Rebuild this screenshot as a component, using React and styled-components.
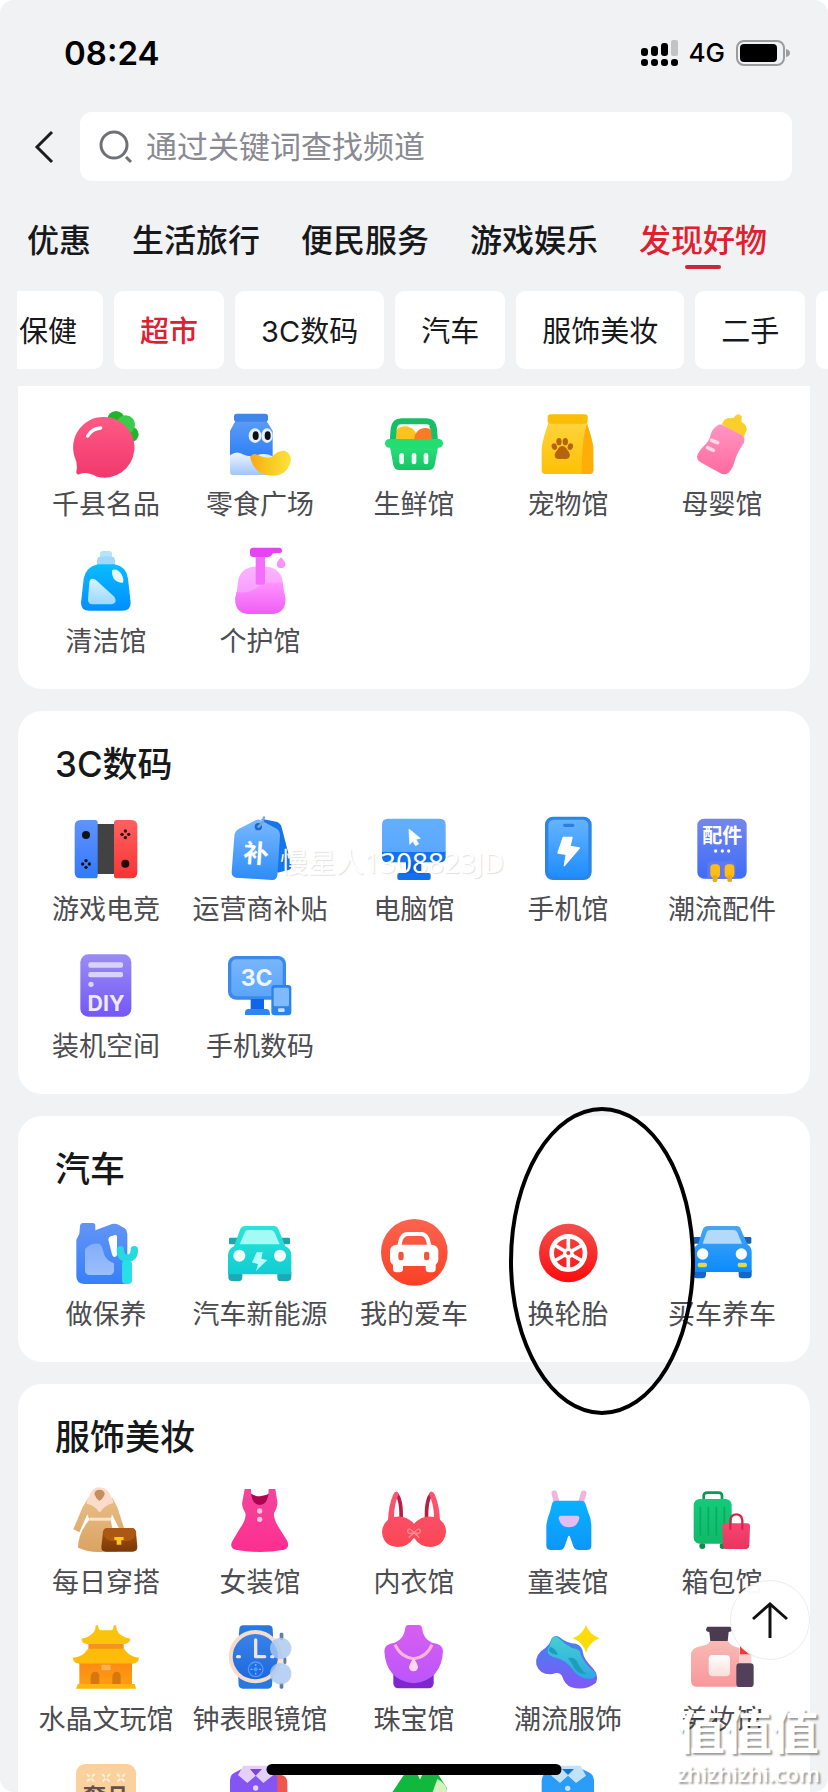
import { useState } from "react";
import styled, { createGlobalStyle } from "styled-components";

const GlobalStyle = createGlobalStyle`
  * {
    box-sizing: border-box;
  }
  body {
    margin: 0;
    background: #fff;
    font-family: Inter, "Noto Sans CJK SC", sans-serif;
    color: #17181a;
  }
  button, input {
    font: inherit;
    color: inherit;
    border: 0;
    padding: 0;
    background: none;
  }
  a {
    color: inherit;
    text-decoration: none;
  }
  svg {
    display: block;
    flex-shrink: 0;
  }
`;

const IconText = styled.text`
  font-size: ${({ $size }) => $size}px;
  font-weight: 700;
  text-anchor: middle;
  fill: ${({ fill }) => fill || "#fff"};
`;

const Fade = ({ id, from, to }) => (
  <linearGradient id={id} x1="0" y1="0" x2="0" y2="1">
    <stop offset="0" stopColor={from} />
    <stop offset="1" stopColor={to} />
  </linearGradient>
);

const icons = {
  radish: (
    <>
      <Fade id="radish" from="#ff5a86" to="#f0386c" />
      <circle cx="138" cy="38" r="26" fill="#1fb32e" />
      <circle cx="183" cy="82" r="23" fill="#1fb32e" />
      <circle cx="167" cy="53" r="28" fill="#3bcb4b" />
      <path
        d="M99 30a90 91 0 1 1-18 179Q48 191 28 202Q18 204 19 194Q24 172 14 150A90 91 0 0 1 99 30z"
        fill="url(#radish)"
      />
      <path d="M53 87Q66 65 92 63" stroke="#fff" strokeWidth="10" strokeLinecap="round" fill="none" />
    </>
  ),
  snack: (
    <>
      <Fade id="milk" from="#5b9bf2" to="#2f80fb" />
      <Fade id="milkLow" from="#edf4ff" to="#9fc6fb" />
      <linearGradient id="chip">
        <stop offset="0" stopColor="#f9a616" />
        <stop offset=".4" stopColor="#f8c51c" />
        <stop offset="1" stopColor="#fde33c" />
      </linearGradient>
      <path d="M34 42H128L146 72V150H18V72z" fill="url(#milk)" />
      <rect x="30" y="20" width="102" height="24" rx="8" fill="#3f86ea" />
      <path d="M18 145Q38 130 56 142Q80 152 100 144Q124 136 146 148V204H28Q18 204 18 194z" fill="url(#milkLow)" />
      <ellipse cx="93" cy="86" rx="19" ry="22" fill="#e4f1fb" />
      <ellipse cx="129" cy="86" rx="17" ry="22" fill="#e4f1fb" />
      <ellipse cx="95" cy="86" rx="9" ry="13" fill="#0c1118" />
      <ellipse cx="131" cy="86" rx="9" ry="13" fill="#0c1118" />
      <path
        d="M78 150Q86 136 100 143Q124 156 144 150Q160 130 182 131Q204 140 200 165Q188 206 146 206Q92 206 78 150z"
        fill="url(#chip)"
      />
    </>
  ),
  basket: (
    <>
      <Fade id="basket" from="#2be37a" to="#16c466" />
      <circle cx="81" cy="94" r="36" fill="#fcc21f" />
      <circle cx="142" cy="96" r="33" fill="#fb7a22" />
      <path d="M154 60Q158 50 172 52Q172 68 160 68z" fill="#0c8d3d" />
      <path d="M44 104L47 66Q50 43 70 43H146Q165 43 168 66L171 104" stroke="#14c065" strokeWidth="18" fill="none" />
      <path d="M34 110L46 174Q49 189 64 189H152Q167 189 170 174L182 110z" fill="url(#basket)" />
      <rect x="21" y="96" width="174" height="26" rx="13" fill="#22de72" />
      <rect x="64" y="138" width="14" height="34" rx="7" fill="#f0fff6" />
      <rect x="101" y="138" width="14" height="34" rx="7" fill="#f0fff6" />
      <rect x="137" y="138" width="14" height="34" rx="7" fill="#f0fff6" />
    </>
  ),
  pet: (
    <>
      <Fade id="pet" from="#ffd33c" to="#fdc105" />
      <path d="M50 46H165L180 104Q184 120 184 190Q184 201 172 201H40Q29 201 29 190V125Q31 98 50 46z" fill="url(#pet)" />
      <path d="M165 50Q149 96 149 201H172Q184 201 184 190V120Q181 96 165 50z" fill="#ffad08" />
      <rect x="47" y="22" width="120" height="28" rx="9" fill="#fbbd06" />
      <ellipse cx="67" cy="119" rx="8" ry="10" fill="#b5640c" transform="rotate(-20 67 119)" />
      <ellipse cx="81" cy="104" rx="8" ry="11" fill="#b5640c" />
      <ellipse cx="100" cy="104" rx="8" ry="11" fill="#b5640c" />
      <ellipse cx="115" cy="119" rx="8" ry="10" fill="#b5640c" transform="rotate(20 115 119)" />
      <path d="M91 117Q100 117 106 129Q118 142 111 152Q104 158 91 155Q76 158 70 152Q64 142 76 129Q82 117 91 117z" fill="#b5640c" />
    </>
  ),
  baby: (
    <>
      <Fade id="baby" from="#ff96c2" to="#ff6a9f" />
      <path d="M108 52Q112 36 128 33Q144 36 148 26Q158 16 167 28Q168 38 166 44Q186 56 181 72L172 92z" fill="#fbcf2b" />
      <path
        d="M92 57Q102 49 114 56L166 84Q179 92 174 107Q152 138 146 163Q140 186 128 197Q116 206 102 198L44 166Q29 157 35 142Q42 126 60 110Q71 100 74 82Q80 64 92 57z"
        fill="url(#baby)"
      />
      <path d="M77 100L95 107M65 122L82 130" stroke="#ffd9e8" strokeWidth="11" strokeLinecap="round" />
    </>
  ),
  clean: (
    <>
      <Fade id="clean" from="#0bbcff" to="#008eff" />
      <Fade id="cleanPane" from="#d8f2ff" to="#9bd8fd" />
      <rect x="90" y="21" width="36" height="26" rx="8" fill="#b8e2fb" />
      <path d="M84 40Q108 34 132 40Q138 50 134 62H82Q78 50 84 40z" fill="#9fd8fa" />
      <path
        d="M84 61H134Q170 68 174 104L182 176Q182 200 157 200H58Q33 200 33 176L41 104Q48 68 84 61z"
        fill="url(#clean)"
      />
      <path d="M58 116Q60 98 77 107L133 158Q144 178 124 181H68Q53 181 54 166z" fill="url(#cleanPane)" />
      <path d="M126 79Q140 70 154 90Q164 108 158 117Q124 114 126 79z" fill="#e6f7ff" />
    </>
  ),
  care: (
    <>
      <Fade id="care" from="#fbb5ff" to="#f48bff" />
      <Fade id="careLow" from="#ff94ff" to="#ee5df5" />
      <path
        d="M86 68H132Q170 74 176 112Q178 140 184 162Q186 208 144 210H74Q32 208 34 162Q40 140 42 112Q48 74 86 68z"
        fill="url(#care)"
      />
      <path
        d="M38 144Q74 150 104 128Q136 108 176 118Q178 140 184 162Q186 208 144 210H74Q32 208 34 162z"
        fill="url(#careLow)"
      />
      <rect x="95" y="34" width="28" height="88" rx="6" fill="#f66dfb" />
      <path d="M86 11H166Q174 12 174 20Q174 27 166 27H146Q142 39 132 39H88Q78 38 78 30V20Q78 12 86 11z" fill="#e643f3" />
      <path d="M171 40Q186 56 184 62Q182 72 171 72Q160 72 158 62Q158 54 171 40z" fill="#fb92fb" />
    </>
  ),
  game: (
    <>
      <Fade id="gameL" from="#5f93fb" to="#3279ff" />
      <Fade id="gameR" from="#ff6160" to="#f83434" />
      <rect x="80" y="36" width="56" height="150" fill="#424242" />
      <path d="M80 24V199H32Q14 199 14 181V42Q14 24 32 24H76Q83 24 83 32V191Q83 199 76 199" fill="url(#gameL)" />
      <path d="M140 24H184Q202 24 202 42V181Q202 199 184 199H140Q132 199 132 191V32Q132 24 140 24z" fill="url(#gameR)" />
      <circle cx="48" cy="69" r="12" fill="#10131a" />
      <circle cx="166" cy="155" r="12" fill="#1c0b0c" />
      {[[166, 67], [48, 156]].map(([x, y]) => (
        <g key={x} fill="#161112">
          <circle cx={x} cy={y - 10} r="5" />
          <circle cx={x} cy={y + 10} r="5" />
          <circle cx={x - 10} cy={y} r="5" />
          <circle cx={x + 10} cy={y} r="5" />
        </g>
      ))}
    </>
  ),
  tag: (
    <>
      <Fade id="tag" from="#79b9fd" to="#2d8bf8" />
      <path d="M112 20L160 30Q172 36 174 50L202 158Q204 170 194 174L160 182z" fill="#1674ec" />
      <path
        d="M31 72Q32 58 44 51L96 24Q104 20 113 26L158 50Q168 57 168 70L160 190Q158 205 144 204L36 197Q22 194 23 180z"
        fill="url(#tag)"
      />
      <circle cx="103" cy="44" r="11" fill="#1a68cf" />
      <path d="M103 44Q116 36 120 16" stroke="#74a7e3" strokeWidth="7" strokeLinecap="round" fill="none" />
      <IconText x="96" y="152" $size={76} transform="rotate(4 96 124)">补</IconText>
    </>
  ),
  computer: (
    <>
      <Fade id="pc" from="#63aefe" to="#5aa8ff" />
      <path d="M84 150H130V186H84z" fill="#0d63e4" />
      <path d="M12 118H203V134Q203 151 186 151H29Q12 151 12 134z" fill="#1372ee" />
      <path d="M12 120V38Q12 20 30 20H185Q203 20 203 38V120z" fill="url(#pc)" />
      <rect x="58" y="183" width="100" height="21" rx="6" fill="#146fec" />
      <path d="M93 51L127 79L114 82L122 96L112 101L105 88L95 97z" fill="#fff" stroke="#fff" strokeWidth="2" strokeLinejoin="round" />
    </>
  ),
  phone: (
    <>
      <Fade id="phone" from="#66b3fe" to="#1f8dff" />
      <rect x="39" y="14" width="140" height="190" rx="24" fill="#2b84e6" />
      <rect x="49" y="23" width="120" height="172" rx="16" fill="url(#phone)" />
      <rect x="93" y="35" width="34" height="10" rx="5" fill="#2b7fe0" />
      <path
        d="M94 76H120L114 103L142 108L97 161L103 127L78 123z"
        fill="#fff"
        stroke="#fff"
        strokeWidth="4"
        strokeLinejoin="round"
      />
    </>
  ),
  parts: (
    <>
      <Fade id="parts" from="#7486ec" to="#3e6df8" />
      <rect x="34" y="20" width="148" height="180" rx="20" fill="url(#parts)" />
      <path d="M64 200V158Q66 148 76 148H136Q148 148 148 158V200z" fill="#6079f1" />
      <rect x="73" y="157" width="29" height="40" rx="11" fill="#fdbd16" />
      <rect x="80" y="190" width="14" height="20" rx="5" fill="#f0a80f" />
      <rect x="116" y="157" width="29" height="40" rx="11" fill="#fdbd16" />
      <rect x="124" y="190" width="14" height="20" rx="5" fill="#f0a80f" />
      <circle cx="89" cy="117" r="5" fill="#fff" />
      <circle cx="109" cy="117" r="5" fill="#fff" />
      <circle cx="128" cy="117" r="5" fill="#fff" />
      <IconText x="109" y="92" $size={60}>配件</IconText>
    </>
  ),
  diy: (
    <>
      <Fade id="diy" from="#9a8cf4" to="#7457f6" />
      <rect x="31" y="16" width="153" height="187" rx="24" fill="url(#diy)" />
      <g fill="#d9d3fc">
        <rect x="55" y="40" width="104" height="16" rx="6" />
        <rect x="55" y="69" width="104" height="16" rx="6" />
        <circle cx="63" cy="106" r="8" />
      </g>
      <IconText x="108" y="185" $size={64} fill="#eeebff">DIY</IconText>
    </>
  ),
  digital: (
    <>
      <Fade id="digi" from="#79b5fb" to="#5aa6fb" />
      <rect x="12" y="21" width="174" height="131" rx="24" fill="#3a8aee" />
      <rect x="22" y="31" width="154" height="111" rx="15" fill="url(#digi)" />
      <rect x="80" y="150" width="40" height="34" fill="#0f67e8" />
      <path d="M63 198V190Q64 180 74 180H128Q138 180 138 198z" fill="#2c86f4" />
      <rect x="142" y="108" width="60" height="91" rx="10" fill="#2d83ec" />
      <rect x="149" y="116" width="46" height="56" rx="5" fill="#7fbafc" />
      <rect x="162" y="178" width="20" height="11" rx="4" fill="#c9e3ff" />
      <IconText x="98" y="110" $size={69} fill="#edf6ff">3C</IconText>
    </>
  ),
  service: (
    <>
      <Fade id="oil" from="#6394f5" to="#3580fa" />
      <Fade id="oilPane" from="#83adf9" to="#9cbffb" />
      <path
        fillRule="evenodd"
        d="M30 26Q31 18 38 18H68Q76 18 76 26V40L126 21Q136 18 147 24L164 34Q172 39 172 50V201H42Q19 200 19 178V68L28 50zM115 68Q115 60 122 58L136 54Q141 53 141 60V112Q141 120 132 120Q128 120 126 112z"
        fill="url(#oil)"
      />
      <path d="M45 96Q62 76 88 80Q97 84 102 112Q110 132 132 139V162Q130 174 118 174H58Q45 173 45 160z" fill="url(#oilPane)" />
      <path d="M151 98Q151 123 172 123Q193 123 193 98M171 124V186" stroke="#25d9e2" strokeWidth="22" strokeLinecap="round" fill="none" />
      <rect x="156" y="130" width="30" height="71" rx="12" fill="#28dfe6" />
    </>
  ),
  evcar: (
    <>
      <Fade id="ev" from="#2ce4da" to="#11cdd2" />
      <rect x="15" y="62" width="30" height="20" rx="4" fill="#1ba5ad" />
      <rect x="170" y="62" width="28" height="20" rx="4" fill="#1ba5ad" />
      <path d="M13 166H55V182Q54 192 44 192H24Q13 192 13 180z" fill="#1aa9b6" />
      <path d="M160 166H202V180Q202 192 190 192H170Q160 192 160 182z" fill="#1aa9b6" />
      <path
        d="M48 38Q52 27 64 27H150Q160 27 164 38L184 88Q202 96 202 114V172H12V114Q13 96 30 88z"
        fill="url(#ev)"
      />
      <path d="M62 47Q64 39 74 39H140Q148 39 152 47L167 82H47z" fill="#a4fbf6" />
      <circle cx="46" cy="116" r="18" fill="#f2fffd" />
      <circle cx="168" cy="116" r="18" fill="#f2fffd" />
      <path d="M98 106H116L112 125L130 129L96 162L102 141L84 136z" fill="#b9fff9" />
    </>
  ),
  mycar: (
    <>
      <Fade id="mycar" from="#fb6450" to="#fa4024" />
      <circle cx="109" cy="106" r="100" fill="url(#mycar)" />
      <rect x="36" y="83" width="145" height="64" rx="20" fill="#fff" />
      <rect x="45" y="128" width="30" height="38" rx="10" fill="#fff" />
      <rect x="143" y="128" width="30" height="38" rx="10" fill="#fff" />
      <path d="M64 90Q68 51 88 51H130Q150 51 154 90" stroke="#fff" strokeWidth="12" fill="none" />
      <rect x="61" y="104" width="16" height="26" rx="7" fill="#f4543c" />
      <rect x="138" y="104" width="16" height="26" rx="7" fill="#f4543c" />
    </>
  ),
  tire: (
    <>
      <Fade id="tire" from="#f2504c" to="#fb0c0c" />
      <circle cx="109" cy="108" r="88" fill="url(#tire)" />
      <circle cx="109" cy="108" r="50" stroke="#fff" strokeWidth="14" fill="none" />
      <path d="M109 60V156M67 84L151 132M67 132L151 84" stroke="#fff" strokeWidth="11" />
      <circle cx="109" cy="108" r="16" fill="#fff" />
      <circle cx="109" cy="108" r="6" fill="#f6302e" />
    </>
  ),
  bluecar: (
    <>
      <Fade id="bluecar" from="#47a6f3" to="#0b8bff" />
      <rect x="20" y="60" width="30" height="20" rx="4" fill="#1763b8" />
      <rect x="168" y="60" width="28" height="20" rx="4" fill="#1763b8" />
      <path d="M22 160H60V174Q59 184 49 184H32Q22 184 22 174z" fill="#1567c6" />
      <path d="M158 160H197V174Q197 184 187 184H168Q158 184 158 174z" fill="#1567c6" />
      <path
        d="M50 38Q54 27 66 27H152Q162 27 165 38L184 82Q197 90 197 106V165H22V106Q23 90 36 82z"
        fill="url(#bluecar)"
      />
      <path d="M62 46Q64 39 74 39H142Q150 39 154 46L168 80H50z" fill="#b3dafb" />
      <circle cx="50" cy="111" r="17" fill="#fff" />
      <circle cx="166" cy="111" r="17" fill="#fff" />
      <rect x="35" y="137" width="28" height="14" rx="6" fill="#e8d648" />
      <rect x="155" y="137" width="28" height="14" rx="6" fill="#e8d648" />
    </>
  ),
  coat: (
    <>
      <Fade id="coat" from="#e9bd85" to="#d9a362" />
      <Fade id="purse" from="#a9540f" to="#7b3807" />
      <path
        d="M54 40L38 66L10 133L28 142L52 88L58 104Q24 146 24 188Q60 204 100 200H140L122 104L126 88L148 132L163 132L142 66L128 40z"
        fill="url(#coat)"
      />
      <path d="M62 24Q70 7 88 7Q108 8 118 24Q130 46 130 54Q104 60 92 80H86Q74 60 50 56Q50 44 62 24z" fill="#fbdccb" />
      <path d="M88 14Q102 14 104 26Q102 38 88 48Q76 38 73 26Q76 14 88 14z" fill="#c88d5e" />
      <rect x="58" y="98" width="66" height="9" fill="#fbe3cd" />
      <path d="M99 142Q101 129 114 129H184Q196 129 198 142L202 186Q202 200 188 200H108Q93 200 94 186z" fill="url(#purse)" />
      <path d="M99 142Q101 129 114 129H184Q196 129 198 142Q196 166 172 168H124Q102 164 99 142z" fill="#ab5812" />
      <path d="M133 156H161V165H154V179H140V165H133z" fill="#ffc422" />
    </>
  ),
  dress: (
    <>
      <Fade id="dress" from="#f2469c" to="#ff2e90" />
      <path d="M78 24Q108 44 138 24L136 62H80z" fill="#ae0452" />
      <path
        d="M62 12H81Q80 60 108 60Q134 58 134 12H154L160 50Q162 64 150 84Q148 102 166 130L190 168Q198 188 180 194Q108 208 34 194Q16 188 24 170L48 130Q68 102 64 84Q52 64 55 50z"
        fill="url(#dress)"
      />
      <circle cx="107" cy="78" r="8" fill="#fbc2dc" />
      <circle cx="107" cy="103" r="8" fill="#fbc2dc" />
    </>
  ),
  bra: (
    <>
      <Fade id="bra" from="#fa5674" to="#fb4654" />
      <path d="M54 26Q72 44 69 108M161 26Q143 44 146 108" stroke="#bb1c42" strokeWidth="11" fill="none" />
      <path
        d="M46 28Q54 12 62 26Q48 60 48 96Q82 88 108 116Q134 88 168 96Q168 60 153 26Q161 12 170 28Q184 60 186 104Q206 120 204 142Q198 184 158 186Q126 186 108 158Q90 186 58 186Q16 184 12 142Q12 120 30 104Q32 60 46 28z"
        fill="url(#bra)"
      />
      <path
        d="M108 143Q92 124 89 138Q90 150 108 143Q126 150 127 138Q124 124 108 143L92 158M108 143L124 158"
        stroke="#ff8b93"
        strokeWidth="4"
        fill="none"
      />
    </>
  ),
  kids: (
    <>
      <Fade id="kids" from="#08b2ff" to="#0d96f8" />
      <path d="M67 25L74 52M155 25L147 52" stroke="#edb6dc" strokeWidth="17" strokeLinecap="round" />
      <path
        d="M60 56Q62 47 74 47H148Q158 47 160 56L168 80Q178 100 178 120V182Q178 195 164 195H138Q127 194 124 184L114 155Q111 150 108 155L98 184Q95 195 83 195H58Q43 195 43 182V120Q46 98 54 80z"
        fill="url(#kids)"
      />
      <path d="M80 100Q79 92 87 92H135Q143 92 142 100Q136 127 111 127Q86 127 80 100z" fill="#e3bdf1" />
    </>
  ),
  luggage: (
    <>
      <Fade id="lug" from="#12cb7a" to="#10b968" />
      <Fade id="tote" from="#f84470" to="#e83560" />
      <path d="M53 46V32Q54 23 64 23H98Q107 23 108 32V46" stroke="#0b9b56" strokeWidth="8" fill="none" />
      <circle cx="49" cy="183" r="9" fill="#0d8a4c" />
      <circle cx="110" cy="183" r="9" fill="#0d8a4c" />
      <rect x="23" y="42" width="114" height="134" rx="18" fill="url(#lug)" />
      <path d="M43 68V150M67 68V150M91 68V150M115 68V150" stroke="#0ca860" strokeWidth="5" strokeLinecap="round" />
      <path d="M109 123Q109 115 117 115H184Q192 115 192 123L190 182Q188 192 178 192H122Q112 192 111 182z" fill="url(#tote)" />
      <path d="M133 132V106Q135 88 151 88Q167 88 169 106V132" stroke="#d7244f" strokeWidth="7" strokeLinecap="round" fill="none" />
    </>
  ),
  temple: (
    <>
      <Fade id="wall" from="#fb8a15" to="#ff9d10" />
      <rect x="55" y="60" width="106" height="26" fill="#f7931b" />
      <path
        d="M77 10H84Q85 24 92 25H124Q131 24 131 10H138Q139 26 146 34Q162 48 181 50Q180 64 164 66H50Q35 64 34 50Q54 48 68 34Q77 26 77 10z"
        fill="#fcc30d"
      />
      <path d="M54 80H162Q180 106 207 107Q206 124 188 125H28Q10 124 8 107Q38 106 54 80z" fill="#fdbb0a" />
      <rect x="28" y="124" width="158" height="64" fill="url(#wall)" />
      <rect x="94" y="128" width="28" height="17" rx="3" fill="#fcb355" />
      <path d="M62 188V164Q64 149 76 149Q88 149 88 164V188zM127 188V164Q129 149 140 149Q152 149 152 164V188z" fill="#d6780f" />
      <path d="M24 186H194L198 200H18z" fill="#fcb50c" />
    </>
  ),
  watch: (
    <>
      <Fade id="watch" from="#3a82e8" to="#1e68df" />
      <path d="M46 20Q48 10 58 10H134Q144 10 146 20L150 104L144 190Q142 200 132 200H56Q46 200 44 190L40 104z" fill="#2779df" />
      <circle cx="94" cy="104" r="80" fill="#f5dccb" />
      <circle cx="94" cy="104" r="68" fill="url(#watch)" />
      <path d="M95 54V104H122" stroke="#f1e2dc" strokeWidth="10" strokeLinejoin="round" strokeLinecap="round" fill="none" />
      <rect x="36" y="99" width="15" height="10" rx="5" fill="#e6e6f2" />
      <rect x="138" y="99" width="14" height="10" rx="5" fill="#e6e6f2" />
      <circle cx="95" cy="142" r="22" stroke="#4f9cfb" strokeWidth="4" fill="none" />
      <path d="M95 126V132M95 152V158M79 142H85M105 142H111" stroke="#7ab6ff" strokeWidth="4" />
      <circle cx="95" cy="142" r="6" fill="#4f9cfb" />
      <rect x="167" y="32" width="11" height="22" rx="4" fill="#5f7ea6" />
      <rect x="178" y="106" width="9" height="20" rx="4" fill="#5f7ea6" />
      <rect x="167" y="182" width="11" height="18" rx="4" fill="#5f7ea6" />
      <circle cx="170" cy="79" r="32" fill="#aac8f2" fillOpacity=".82" />
      <circle cx="170" cy="155" r="32" fill="#aac8f2" fillOpacity=".82" />
      <circle cx="171" cy="117" r="7" fill="#ffe1cd" />
    </>
  ),
  jewel: (
    <>
      <Fade id="bust" from="#d85ff0" to="#bb55fb" />
      <path d="M46 150H167V184Q166 199 152 199H62Q47 199 46 184z" fill="#7f27cf" />
      <path
        d="M82 18Q82 9 92 9H122Q131 9 132 18Q136 52 162 62Q196 66 195 88Q190 176 107 184Q24 176 19 88Q18 66 50 62Q78 52 82 18z"
        fill="url(#bust)"
      />
      <path d="M51 68Q68 106 107 110Q146 106 162 68" stroke="#fbb8d4" strokeWidth="9" fill="none" />
      <path d="M107 108Q120 128 120 136Q118 148 107 148Q95 148 93 136Q94 126 107 108z" fill="#ffd7f4" />
    </>
  ),
  shoe: (
    <>
      <Fade id="sole" from="#3e86ee" to="#8456fa" />
      <Fade id="upper" from="#44d0d3" to="#2ea7e2" />
      <path
        d="M60 48Q72 36 86 48Q104 64 132 65Q152 72 153 94Q156 112 182 138Q202 160 192 182Q160 208 118 196Q98 188 90 162Q82 148 62 156Q24 160 13 128Q8 96 40 78Q54 66 60 48z"
        fill="url(#sole)"
      />
      <path
        d="M60 50Q72 38 82 50Q98 66 120 78Q148 82 146 98Q158 126 186 148Q200 164 180 170Q150 174 128 150Q104 112 62 104Q38 96 52 72z"
        fill="url(#upper)"
      />
      <path d="M54 74Q70 78 78 98Q60 98 50 86z" fill="#1b9fb8" />
      <path d="M108 109Q124 104 134 116Q146 144 164 156Q142 158 128 140Q118 120 108 109z" fill="#1b9fb8" />
      <path d="M162 9Q172 38 203 49Q172 60 162 92Q152 60 122 49Q152 38 162 9z" fill="#fbdc08" />
    </>
  ),
  makeup: (
    <>
      <Fade id="perfume" from="#f8bab5" to="#f9979b" />
      <Fade id="sticker" from="#ffffff" to="#fbdeda" />
      <path d="M64 14H134Q140 14 138 24Q136 30 128 30L125 58H73L70 30Q60 30 60 22z" fill="#4b3b50" />
      <path d="M72 57H126Q132 72 160 78V194H34Q15 194 15 176V98Q16 78 42 73Q68 70 72 57z" fill="url(#perfume)" />
      <rect x="68" y="99" width="64" height="64" rx="12" fill="url(#sticker)" />
      <rect x="160" y="92" width="36" height="36" fill="#fccdcc" />
      <path d="M162 68Q192 74 194 97H162z" fill="#ec3a40" />
      <rect x="151" y="124" width="52" height="71" rx="10" fill="#52405a" />
    </>
  ),
  luxury: (
    <>
      <rect x="18" y="15" width="180" height="190" rx="28" fill="#fad09c" />
      {[62, 108, 153].map((x) => (
        <path
          key={x}
          d={`M${x - 12} 45L${x + 12} 69M${x + 12} 45L${x - 12} 69`}
          stroke="#fff0dc"
          strokeWidth="6"
          strokeDasharray="12 8"
        />
      ))}
      <IconText x="108" y="140" $size={70} fill="#64504a">奢品</IconText>
    </>
  ),
  shirt: (
    <>
      <path d="M120 48H172Q190 52 190 72V200H120z" fill="#f2554e" />
      <path d="M18 66Q18 46 34 40L60 26H130L150 40Q160 46 160 66V204H18z" fill="#8455f3" />
      <path d="M58 20H132L148 48L118 72L95 50L70 72L42 48z" fill="#e4d0fb" />
      <path d="M78 30H114L95 50z" fill="#7a45dc" />
      <circle cx="95" cy="87" r="8" fill="#e4d0fb" />
    </>
  ),
  green: (
    <>
      <path d="M96 20H164L206 86V204H44L40 104z" fill="#10b93e" />
      <path d="M178 60Q206 74 207 96V110H160z" fill="#d8efc0" />
      <path d="M118 44H134L126 62z" fill="#e9f9e0" />
    </>
  ),
  blueshirt: (
    <>
      <path d="M29 66Q30 46 46 40L72 26H142L170 40Q185 46 186 66V204H29z" fill="#2b9cf7" />
      <path d="M68 20H146L162 50L132 72L108 50L84 72L58 50z" fill="#bfe2fd" />
      <path d="M90 30H126L108 48z" fill="#1775cb" />
      <circle cx="107" cy="88" r="8" fill="#bfe2fd" />
    </>
  ),
};

const tabs = ["优惠", "生活旅行", "便民服务", "游戏娱乐", "发现好物"];
const chips = ["超市", "3C数码", "汽车", "服饰美妆", "二手"];

const sections = [
  {
    items: [
      ["radish", "千县名品"],
      ["snack", "零食广场"],
      ["basket", "生鲜馆"],
      ["pet", "宠物馆"],
      ["baby", "母婴馆"],
      ["clean", "清洁馆"],
      ["care", "个护馆"],
    ],
  },
  {
    title: "3C数码",
    stamp: "慢星人1308823JD",
    items: [
      ["game", "游戏电竞"],
      ["tag", "运营商补贴"],
      ["computer", "电脑馆"],
      ["phone", "手机馆"],
      ["parts", "潮流配件"],
      ["diy", "装机空间"],
      ["digital", "手机数码"],
    ],
  },
  {
    title: "汽车",
    items: [
      ["service", "做保养"],
      ["evcar", "汽车新能源"],
      ["mycar", "我的爱车"],
      ["tire", "换轮胎", true],
      ["bluecar", "买车养车"],
    ],
  },
  {
    title: "服饰美妆",
    items: [
      ["coat", "每日穿搭"],
      ["dress", "女装馆"],
      ["bra", "内衣馆"],
      ["kids", "童装馆"],
      ["luggage", "箱包馆"],
      ["temple", "水晶文玩馆"],
      ["watch", "钟表眼镜馆"],
      ["jewel", "珠宝馆"],
      ["shoe", "潮流服饰"],
      ["makeup", "美妆馆"],
      ["luxury"],
      ["shirt"],
      ["green"],
      ["blueshirt"],
    ],
  },
];

const Signal = () => (
  <svg width="37" height="27" viewBox="0 0 37 27">
    <rect x="0" y="8" width="7" height="8" rx="3" />
    <rect x="10" y="6" width="7" height="10" rx="3" />
    <rect x="20" y="3" width="7" height="13" rx="3" />
    <rect x="30" y="0" width="7" height="16" rx="2" fill="#c2c3c5" />
    <rect x="0" y="19" width="7" height="7" rx="3" />
    <rect x="10" y="19" width="7" height="7" rx="3" />
    <rect x="20" y="19" width="7" height="7" rx="3" />
    <rect x="30" y="19" width="7" height="7" rx="3" />
  </svg>
);

const Battery = () => (
  <svg width="54" height="26" viewBox="0 0 54 26">
    <rect x="1" y="1" width="47" height="24" rx="7" fill="none" stroke="#9b9c9e" strokeWidth="2" />
    <rect x="4" y="4" width="37" height="18" rx="4" />
    <path d="M50 9Q54 10 54 13Q54 16 50 17z" fill="#9b9c9e" />
  </svg>
);

const App = () => {
  const [tab, setTab] = useState("发现好物");
  const [chip, setChip] = useState("超市");

  return (
    <Screen>
      <GlobalStyle />
      <StatusBar>
        <Clock>08:24</Clock>
        <Signal />
        <Network>4G</Network>
        <Battery />
      </StatusBar>

      <SearchRow>
        <BackButton aria-label="返回">
          <svg width="32" height="34" viewBox="0 0 32 34" fill="none" stroke="#1c1d1f" strokeWidth="3">
            <path d="M24 2L9 17L24 32" />
          </svg>
        </BackButton>
        <SearchBox>
          <svg width="34" height="34" viewBox="0 0 34 34" fill="none" stroke="#707176" strokeWidth="3">
            <circle cx="15" cy="15" r="13" />
            <path d="M27 27L32 32" />
          </svg>
          <SearchInput type="search" aria-label="搜索频道" placeholder="通过关键词查找频道" />
        </SearchBox>
      </SearchRow>

      <Tabs>
        {tabs.map((name) => (
          <Tab key={name} $active={name === tab} onClick={() => setTab(name)}>
            {name}
          </Tab>
        ))}
      </Tabs>

      <Chips>
        <Chip $cut $active={chip === "保健"} onClick={() => setChip("保健")}>
          保健
        </Chip>
        {chips.map((name) => (
          <Chip key={name} $active={name === chip} onClick={() => setChip(name)}>
            {name}
          </Chip>
        ))}
        <ChipEdge />
      </Chips>

      <Sections>
        {sections.map(({ title, items, stamp }) => (
          <Card key={title || "top"} $titled={!!title}>
            {title && <Title>{title}</Title>}
            <Grid>
              {items.map(([icon, name, circled]) => (
                <Item key={icon} href="#">
                  <svg width="72" height="72" viewBox="0 0 216 216" aria-hidden="true">
                    {icons[icon]}
                  </svg>
                  {name && <Label>{name}</Label>}
                  {circled && <Circle />}
                </Item>
              ))}
            </Grid>
            {stamp && <Stamp>{stamp}</Stamp>}
          </Card>
        ))}
      </Sections>

      <TopButton aria-label="回到顶部">
        <svg width="40" height="40" viewBox="0 0 40 40" fill="none" stroke="#111" strokeWidth="3">
          <path d="M20 38V4M3 19L20 4L37 19" />
        </svg>
      </TopButton>
      <HomeBar />
      <SiteMark>
        <SiteName>值值值</SiteName>
        <SiteUrl>zhizhizhi.com</SiteUrl>
      </SiteMark>
    </Screen>
  );
};

const Screen = styled.div`
  position: relative;
  height: 100vh;
  overflow: hidden;
  border-radius: 14px;
  background: #f1f2f4;
`;

const StatusBar = styled.header`
  display: flex;
  align-items: center;
  gap: 11px;
  padding: 33px 38px 0 64px;
  line-height: 40px;
  color: #000;
`;

const Clock = styled.time`
  flex: 1;
  font-size: 33px;
  font-weight: 600;
`;

const Network = styled.span`
  font-size: 26px;
  font-weight: 500;
`;

const SearchRow = styled.div`
  display: flex;
  align-items: center;
  margin-top: 39px;
  padding: 0 36px 0 28px;
`;

const BackButton = styled.button`
  width: 52px;
  cursor: pointer;
`;

const SearchBox = styled.label`
  flex: 1;
  display: flex;
  align-items: center;
  gap: 13px;
  height: 69px;
  padding: 0 19px;
  border-radius: 12px;
  background: #fff;
`;

const SearchInput = styled.input`
  flex: 1;
  min-width: 0;
  outline: none;
  font-size: 31px;
  line-height: 44px;

  &::placeholder {
    color: #8a8a92;
    opacity: 1;
  }
`;

const Tabs = styled.nav`
  display: flex;
  gap: 41px;
  margin-top: 40px;
  padding-left: 27px;
`;

const Tab = styled.button`
  position: relative;
  flex-shrink: 0;
  font-size: 32px;
  font-weight: 500;
  line-height: 40px;
  white-space: nowrap;
  cursor: pointer;
  color: ${({ $active }) => ($active ? "#e0202f" : "#17181a")};

  &::after {
    content: "";
    display: ${({ $active }) => ($active ? "block" : "none")};
    position: absolute;
    left: 50%;
    bottom: -8px;
    width: 36px;
    height: 4px;
    margin-left: -18px;
    border-radius: 2px;
    background: #cb2837;
  }
`;

const Chips = styled.div`
  display: flex;
  gap: 11px;
  margin: 30px 0 0 17px;
  overflow: hidden;
`;

const Chip = styled.button`
  flex-shrink: 0;
  height: 78px;
  padding: ${({ $cut }) => ($cut ? "0 26px 3px 2px" : "0 26px 3px")};
  border-radius: ${({ $cut }) => ($cut ? "0 9px 9px 0" : "9px")};
  background: #fff;
  font-size: 29px;
  font-weight: ${({ $active }) => ($active ? 500 : 400)};
  color: ${({ $active }) => ($active ? "#e0202f" : "#17181a")};
  white-space: nowrap;
  cursor: pointer;
`;

const ChipEdge = styled.span`
  flex: 1 0 40px;
  border-radius: 9px;
  background: #fff;
`;

const Sections = styled.main`
  display: flex;
  flex-direction: column;
  gap: 22px;
  padding: 17px 18px 0;
`;

const Card = styled.section`
  position: relative;
  padding: ${({ $titled }) => ($titled ? "32px 11px 29px" : "21px 11px 29px")};
  border-radius: ${({ $titled }) => ($titled ? "24px" : "0 0 24px 24px")};
  background: #fff;
`;

const Title = styled.h2`
  margin: 0 0 27px;
  padding-left: 26px;
  font-size: 35px;
  font-weight: 500;
  line-height: 42px;
`;

const Grid = styled.div`
  display: grid;
  grid-template-columns: repeat(5, 1fr);
  row-gap: 21px;
`;

const Item = styled.a`
  position: relative;
  display: flex;
  flex-direction: column;
  align-items: center;
`;

const Label = styled.span`
  margin-top: 8px;
  font-size: 27px;
  line-height: 36px;
  white-space: nowrap;
  color: #4c4c51;
`;

const Circle = styled.span`
  position: absolute;
  z-index: 1;
  top: -110px;
  left: 18px;
  width: 186px;
  height: 308px;
  border: 4px solid #000;
  border-radius: 50%;
  pointer-events: none;
`;

const Stamp = styled.span`
  position: absolute;
  top: 131px;
  left: 262px;
  font-family: "Noto Sans", "Noto Sans CJK SC", sans-serif;
  font-size: 28px;
  line-height: 40px;
  color: #fff;
  text-shadow: 1px 1px 1px rgba(0, 0, 0, 0.12);
  white-space: nowrap;
`;

const TopButton = styled.button`
  position: absolute;
  right: 18px;
  bottom: 132px;
  display: flex;
  align-items: center;
  justify-content: center;
  width: 80px;
  height: 80px;
  border: 1px solid #ececee;
  border-radius: 50%;
  background: rgba(255, 255, 255, 0.97);
  cursor: pointer;
`;

const HomeBar = styled.div`
  position: absolute;
  left: 50%;
  bottom: 17px;
  width: 295px;
  height: 11px;
  border-radius: 6px;
  background: #000;
  transform: translateX(-50%);
`;

const SiteMark = styled.div`
  position: absolute;
  right: 8px;
  bottom: 4px;
  display: flex;
  flex-direction: column;
  align-items: center;
  color: #fff;
  text-shadow: 2px 2px 2px rgba(0, 0, 0, 0.4);
`;

const SiteName = styled.span`
  font-size: 47px;
  font-weight: 700;
  line-height: 52px;
`;

const SiteUrl = styled.span`
  font-family: "Open Sans", sans-serif;
  font-size: 22px;
  font-weight: 600;
  line-height: 30px;
`;

export default App;
